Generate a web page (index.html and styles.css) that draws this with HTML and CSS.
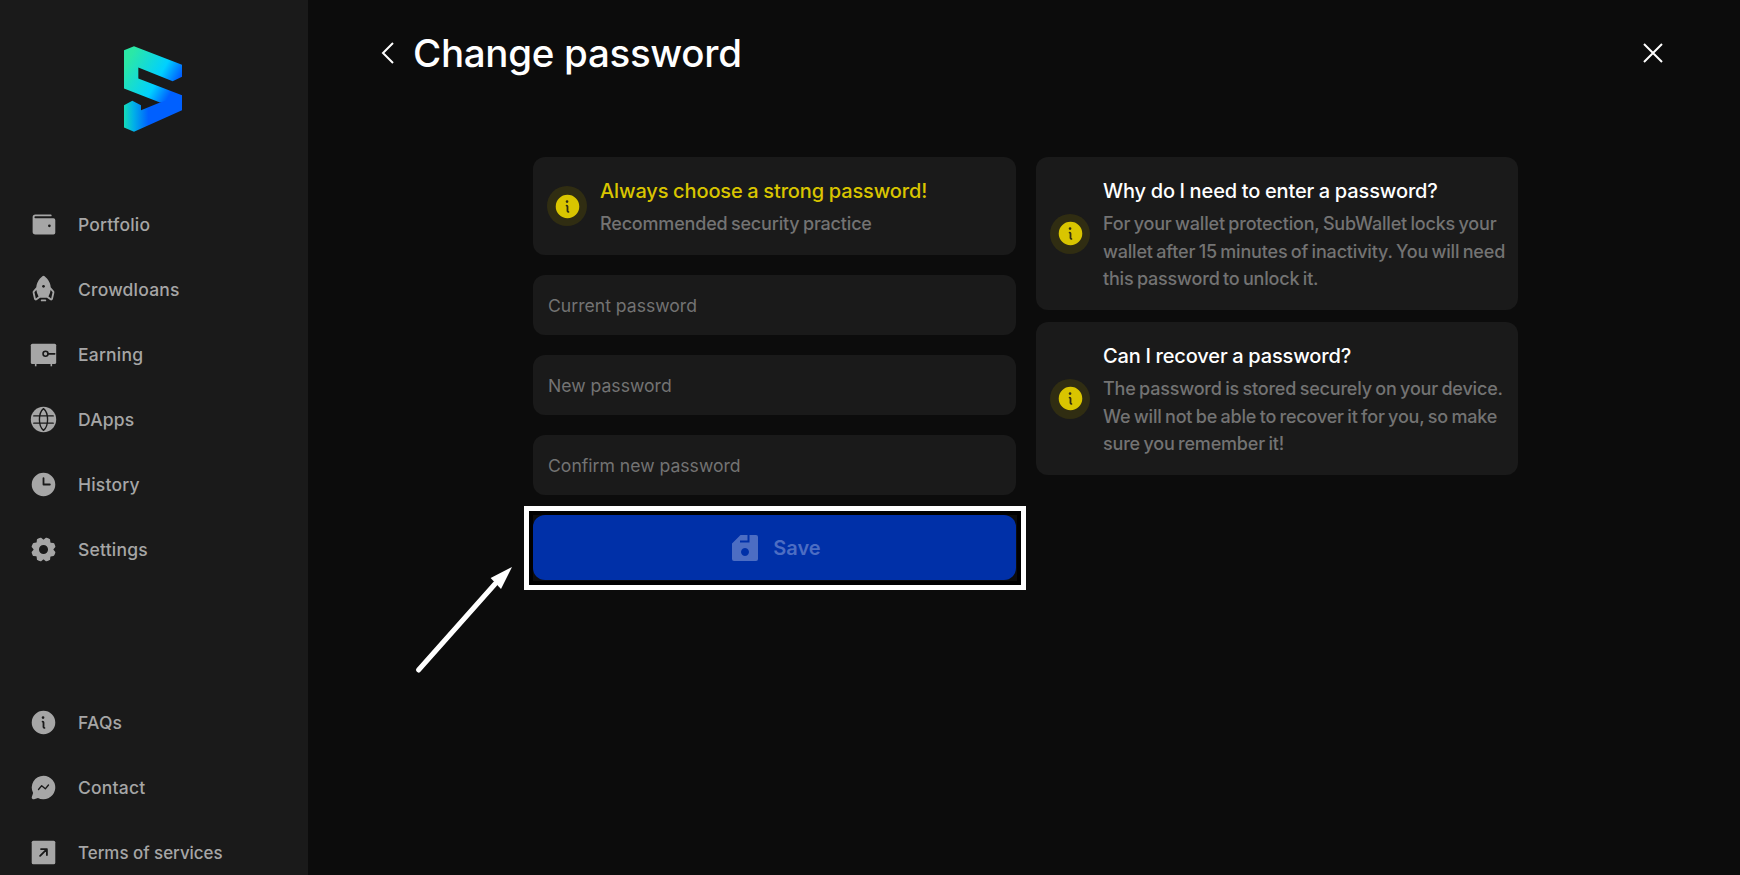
FILE: index.html
```html
<!DOCTYPE html>
<html lang="en">
<head>
<meta charset="utf-8">
<title>Change password</title>
<link rel="stylesheet" href="styles.css">
</head>
<body>
<div class="app">
  <aside class="sidebar">
    <div class="logo-wrap">
      <svg class="logo" viewBox="372 138 174 257">
        <defs>
          <linearGradient id="lg" gradientUnits="userSpaceOnUse" x1="372" y1="200" x2="546" y2="300">
            <stop offset="0" stop-color="#2be8a6"/>
            <stop offset="0.53" stop-color="#00d0ff"/>
            <stop offset="0.8" stop-color="#0060ff"/>
          </linearGradient>
          <linearGradient id="lg2" gradientUnits="userSpaceOnUse" x1="372" y1="350" x2="445" y2="350">
            <stop offset="0" stop-color="#14dcb8"/>
            <stop offset="0.4" stop-color="#00b0e8"/>
            <stop offset="1" stop-color="#0060ff"/>
          </linearGradient>
        </defs>
        <path fill="url(#lg)" d="M372 150L402 138L546 194V230L518 243L415 202V235L546 285V305L480 307L372 265Z"/>
        <path fill="url(#lg2)" d="M372 315L397 302L423 315V330L480 307L546 285V330L402 395L372 382Z"/>
      </svg>
    </div>
    <nav class="nav">
      <a class="nav-item"><svg class="nav-icon" viewBox="0 0 256 256"><path d="M216,72H56a8,8,0,0,1,0-16H192a8,8,0,0,0,0-16H56A24,24,0,0,0,32,64V192a24,24,0,0,0,24,24H216a16,16,0,0,0,16-16V88A16,16,0,0,0,216,72Zm-36,80a12,12,0,1,1,12-12A12,12,0,0,1,180,152Z"/></svg>Portfolio</a>
      <a class="nav-item"><svg class="nav-icon" viewBox="0 0 256 256"><path d="M152,224a8,8,0,0,1-8,8H112a8,8,0,0,1,0-16h32A8,8,0,0,1,152,224Zm71.62-68.17-12.36,55.63a16,16,0,0,1-25.51,9.11L158.51,200h-61L70.25,220.57a16,16,0,0,1-25.51-9.11L32.38,155.83a16.09,16.09,0,0,1,3.32-13.71l28.56-34.26a123.07,123.07,0,0,1,8.57-36.67c12.9-32.34,36-52.63,45.37-59.85a16,16,0,0,1,19.6,0c9.34,7.22,32.47,27.51,45.37,59.85a123.07,123.07,0,0,1,8.57,36.67l28.56,34.26A16.09,16.09,0,0,1,223.62,155.83ZM84.43,189.85Q68.28,160.5,64.83,132.16L48,152.36,60.36,208l.18.13Zm123.63-37.49-16.83-20.2q-3.42,28.28-19.56,57.69l23.85,18.15.18-.13Z"/><circle class="cut" cx="128" cy="100" r="12"/></svg>Crowdloans</a>
      <a class="nav-item"><svg class="nav-icon" viewBox="0 0 256 256"><rect x="16" y="32" width="224" height="180" rx="14"/><rect x="52" y="205" width="14" height="27"/><rect x="190" y="205" width="14" height="27"/><circle class="ring" cx="146" cy="122" r="22"/><path class="line" d="M168 122H226"/></svg>Earning</a>
      <a class="nav-item"><svg class="nav-icon" viewBox="0 0 256 256"><circle cx="128" cy="128" r="112"/><path class="line thin" d="M128 32C80 70 80 186 128 224C176 186 176 70 128 32ZM42 96H214M42 160H214"/></svg>DApps</a>
      <a class="nav-item"><svg class="nav-icon" viewBox="0 0 256 256"><path d="M128,24A104,104,0,1,0,232,128,104.11,104.11,0,0,0,128,24Zm56,112H128a8,8,0,0,1-8-8V72a8,8,0,0,1,16,0v48h48a8,8,0,0,1,0,16Z"/></svg>History</a>
      <a class="nav-item"><svg class="nav-icon" viewBox="0 0 256 256"><path d="M216,130.16q.06-2.16,0-4.32l14.92-18.64a8,8,0,0,0,1.48-7.06,107.6,107.6,0,0,0-10.88-26.25,8,8,0,0,0-6-3.93l-23.72-2.64q-1.48-1.56-3-3L186,40.54a8,8,0,0,0-3.94-6,107.29,107.29,0,0,0-26.25-10.86,8,8,0,0,0-7.06,1.49L130.16,40Q128,40,125.84,40L107.2,25.11a8,8,0,0,0-7.06-1.48A107.6,107.6,0,0,0,73.89,34.51a8,8,0,0,0-3.93,6L67.32,64.27q-1.56,1.49-3,3L40.54,70a8,8,0,0,0-6,3.94,107.71,107.71,0,0,0-10.87,26.25,8,8,0,0,0,1.49,7.06L40,125.84Q40,128,40,130.16L25.11,148.8a8,8,0,0,0-1.48,7.06,107.6,107.6,0,0,0,10.88,26.25,8,8,0,0,0,6,3.93l23.72,2.64q1.49,1.56,3,3L70,215.46a8,8,0,0,0,3.94,6,107.71,107.71,0,0,0,26.25,10.87,8,8,0,0,0,7.06-1.49L125.84,216q2.16.06,4.32,0l18.64,14.92a8,8,0,0,0,7.06,1.48,107.21,107.21,0,0,0,26.25-10.88,8,8,0,0,0,3.93-6l2.64-23.72q1.56-1.48,3-3L215.46,186a8,8,0,0,0,6-3.94,107.71,107.71,0,0,0,10.87-26.25,8,8,0,0,0-1.49-7.06ZM128,168a40,40,0,1,1,40-40A40,40,0,0,1,128,168Z"/></svg>Settings</a>
    </nav>
    <nav class="nav nav-bottom">
      <a class="nav-item"><svg class="nav-icon" viewBox="0 0 256 256"><path d="M128,24A104,104,0,1,0,232,128,104.11,104.11,0,0,0,128,24Zm-4,48a12,12,0,1,1-12,12A12,12,0,0,1,124,72Zm12,112a16,16,0,0,1-16-16V128a8,8,0,0,1,0-16,16,16,0,0,1,16,16v40a8,8,0,0,1,0,16Z"/></svg>FAQs</a>
      <a class="nav-item"><svg class="nav-icon" viewBox="0 0 256 256"><path d="M128,24A104,104,0,0,0,36.18,176.88L24.83,210.93a16,16,0,0,0,20.24,20.24l34.05-11.35A104,104,0,1,0,128,24Z"/><path class="line thin" d="M84 146L112 112L144 140L172 106"/></svg>Contact</a>
      <a class="nav-item nav-item-long"><svg class="nav-icon" viewBox="0 0 256 256"><rect x="24" y="24" width="208" height="208" rx="14"/><path class="line" d="M98 158L158 98M106 98H158V150"/></svg>Terms of services</a>
    </nav>
  </aside>

  <main class="main">
    <header class="header">
      <svg class="back" viewBox="0 0 16 24"><path d="M13 2L3 12L13 22"/></svg>
      <h1 class="title">Change password</h1>
      <svg class="close" viewBox="0 0 22 22"><path d="M2 2L20 20M20 2L2 20"/></svg>
    </header>

    <div class="content">
      <section class="column">
        <div class="card">
          <span class="badge"><svg class="badge-icon" viewBox="0 0 256 256"><path d="M128,24A104,104,0,1,0,232,128,104.11,104.11,0,0,0,128,24Zm-4,48a12,12,0,1,1-12,12A12,12,0,0,1,124,72Zm12,112a16,16,0,0,1-16-16V128a8,8,0,0,1,0-16,16,16,0,0,1,16,16v40a8,8,0,0,1,0,16Z"/></svg></span>
          <div class="card-text">
            <div class="card-title warn">Always choose a strong password!</div>
            <div class="card-desc">Recommended security practice</div>
          </div>
        </div>
        <input class="field" type="password" placeholder="Current password">
        <input class="field" type="password" placeholder="New password">
        <input class="field" type="password" placeholder="Confirm new password">
        <button class="save" type="button">
          <svg class="save-icon" viewBox="0 0 26 26"><path fill-rule="evenodd" d="M8.5 0H24a2 2 0 0 1 2 2V24a2 2 0 0 1-2 2H2a2 2 0 0 1-2-2V8.5ZM15.5 0V5.5H8V7.5H17.5V0ZM13 13a4 4 0 1 0 .01 0Z"/></svg>
          Save
        </button>
      </section>

      <section class="column column-info">
        <div class="card info">
          <span class="badge"><svg class="badge-icon" viewBox="0 0 256 256"><path d="M128,24A104,104,0,1,0,232,128,104.11,104.11,0,0,0,128,24Zm-4,48a12,12,0,1,1-12,12A12,12,0,0,1,124,72Zm12,112a16,16,0,0,1-16-16V128a8,8,0,0,1,0-16,16,16,0,0,1,16,16v40a8,8,0,0,1,0,16Z"/></svg></span>
          <div class="card-text">
            <div class="card-title">Why do I need to enter a password?</div>
            <div class="card-desc">For your wallet protection, SubWallet locks your<br>wallet after 15 minutes of inactivity. You will need<br>this password to unlock it.</div>
          </div>
        </div>
        <div class="card info">
          <span class="badge"><svg class="badge-icon" viewBox="0 0 256 256"><path d="M128,24A104,104,0,1,0,232,128,104.11,104.11,0,0,0,128,24Zm-4,48a12,12,0,1,1-12,12A12,12,0,0,1,124,72Zm12,112a16,16,0,0,1-16-16V128a8,8,0,0,1,0-16,16,16,0,0,1,16,16v40a8,8,0,0,1,0,16Z"/></svg></span>
          <div class="card-text">
            <div class="card-title">Can I recover a password?</div>
            <div class="card-desc">The password is stored securely on your device.<br>We will not be able to recover it for you, so make<br>sure you remember it!</div>
          </div>
        </div>
      </section>
    </div>
  </main>

  <div class="highlight"></div>
  <svg class="arrow" viewBox="0 0 100 110"><path class="arrow-shaft" d="M4.5 106L81 20"/><path class="arrow-head" d="M98 3L87 25L76.6 14Z"/></svg>
</div>
</body>
</html>
```

FILE: styles.css
```css
* { box-sizing: border-box; margin: 0; padding: 0; }

html, body {
  height: 100%;
  overflow: hidden;
  background: #0c0c0c;
  font-family: Inter, "Noto Sans", sans-serif;
}

.app {
  position: relative;
  display: flex;
  height: 875px;
  overflow: hidden;
}

.sidebar {
  flex: 0 0 308px;
  background: #1a1a1a;
  display: flex;
  flex-direction: column;
}

.logo-wrap {
  display: flex;
  justify-content: center;
  padding: 46px 2px 41px 0;
  height: 192px;
  flex: none;
}

.logo { width: 58px; height: 86px; }

.nav { display: flex; flex-direction: column; flex: none; }
.nav-bottom { margin-top: 108px; }

.nav-item {
  display: flex;
  align-items: center;
  height: 65px;
  flex: none;
  padding-left: 29px;
  gap: 20px;
  font-size: 17.5px;
  font-weight: 500;
  letter-spacing: 0.2px;
  color: #a6a6a6;
}

.nav-item-long { font-size: 16.9px; letter-spacing: 0; }

.nav-icon { width: 29px; height: 29px; fill: #a6a6a6; flex: none; }
.nav-icon .cut { fill: #1a1a1a; }
.nav-icon .ring { fill: none; stroke: #1a1a1a; stroke-width: 14; }
.nav-icon .line { fill: none; stroke: #1a1a1a; stroke-width: 16; stroke-linecap: round; stroke-linejoin: round; }
.nav-icon .thin { stroke-width: 12; }

.main { flex: 1; min-width: 0; }

.header {
  display: flex;
  align-items: center;
  height: 105px;
  padding: 0 76px 0 72px;
}

.back { width: 16px; height: 24px; margin-right: 17px; fill: none; stroke: #fff; stroke-width: 2; }
.title { flex: 1; font-size: 38.5px; font-weight: 500; color: #fff; letter-spacing: -0.3px; }
.close { width: 22px; height: 22px; fill: none; stroke: #fff; stroke-width: 2; }

.content {
  display: grid;
  grid-template-columns: 483px 482px;
  gap: 20px;
  justify-content: start;
  padding: 52px 0 0 225px;
}

.column { display: flex; flex-direction: column; gap: 20px; }
.column-info { gap: 12px; }

.card {
  display: flex;
  align-items: center;
  height: 98px;
  padding: 0 14px;
  gap: 13px;
  background: #1a1a1a;
  border-radius: 12px;
}

.card.info { height: 153px; }

.card-text { padding-top: 3px; }

.badge {
  display: flex;
  align-items: center;
  justify-content: center;
  flex: none;
  width: 40px;
  height: 40px;
  border-radius: 50%;
  background: #302d12;
}

.badge-icon { width: 29px; height: 29px; fill: #d9c500; }

.card-title { font-size: 20px; font-weight: 500; line-height: 28px; color: #fff; letter-spacing: -0.12px; word-spacing: -0.5px; }
.card-title.warn { color: #d9c500; }
.card-desc { margin-top: 5px; font-size: 18px; font-weight: 500; line-height: 27.5px; color: #737373; letter-spacing: -0.18px; word-spacing: -1.2px; white-space: nowrap; }

.field {
  height: 60px;
  padding: 0 15px;
  background: #1a1a1a;
  border: 0;
  border-radius: 12px;
  outline: 0;
  font: 400 17.6px Inter, "Noto Sans", sans-serif;
  color: #fff;
}
.field::placeholder { color: #737373; opacity: 1; }

.save {
  display: flex;
  align-items: center;
  justify-content: center;
  gap: 15px;
  height: 65px;
  padding-left: 4px;
  background: #0030a8;
  border: 0;
  border-radius: 12px;
  font: 600 20px Inter, "Noto Sans", sans-serif;
  color: #4c6dc3;
}

.save-icon { width: 26px; height: 26px; fill: #4c6dc3; }

.highlight {
  position: absolute;
  left: 524px;
  top: 506px;
  width: 502px;
  height: 84px;
  border: 5px solid #fff;
  box-shadow: inset 0 0 0 4px #000;
  pointer-events: none;
}

.arrow {
  position: absolute;
  left: 414px;
  top: 564px;
  width: 100px;
  height: 110px;
  pointer-events: none;
}
.arrow-shaft { fill: none; stroke: #fff; stroke-width: 5; stroke-linecap: round; }
.arrow-head { fill: #fff; }
```
